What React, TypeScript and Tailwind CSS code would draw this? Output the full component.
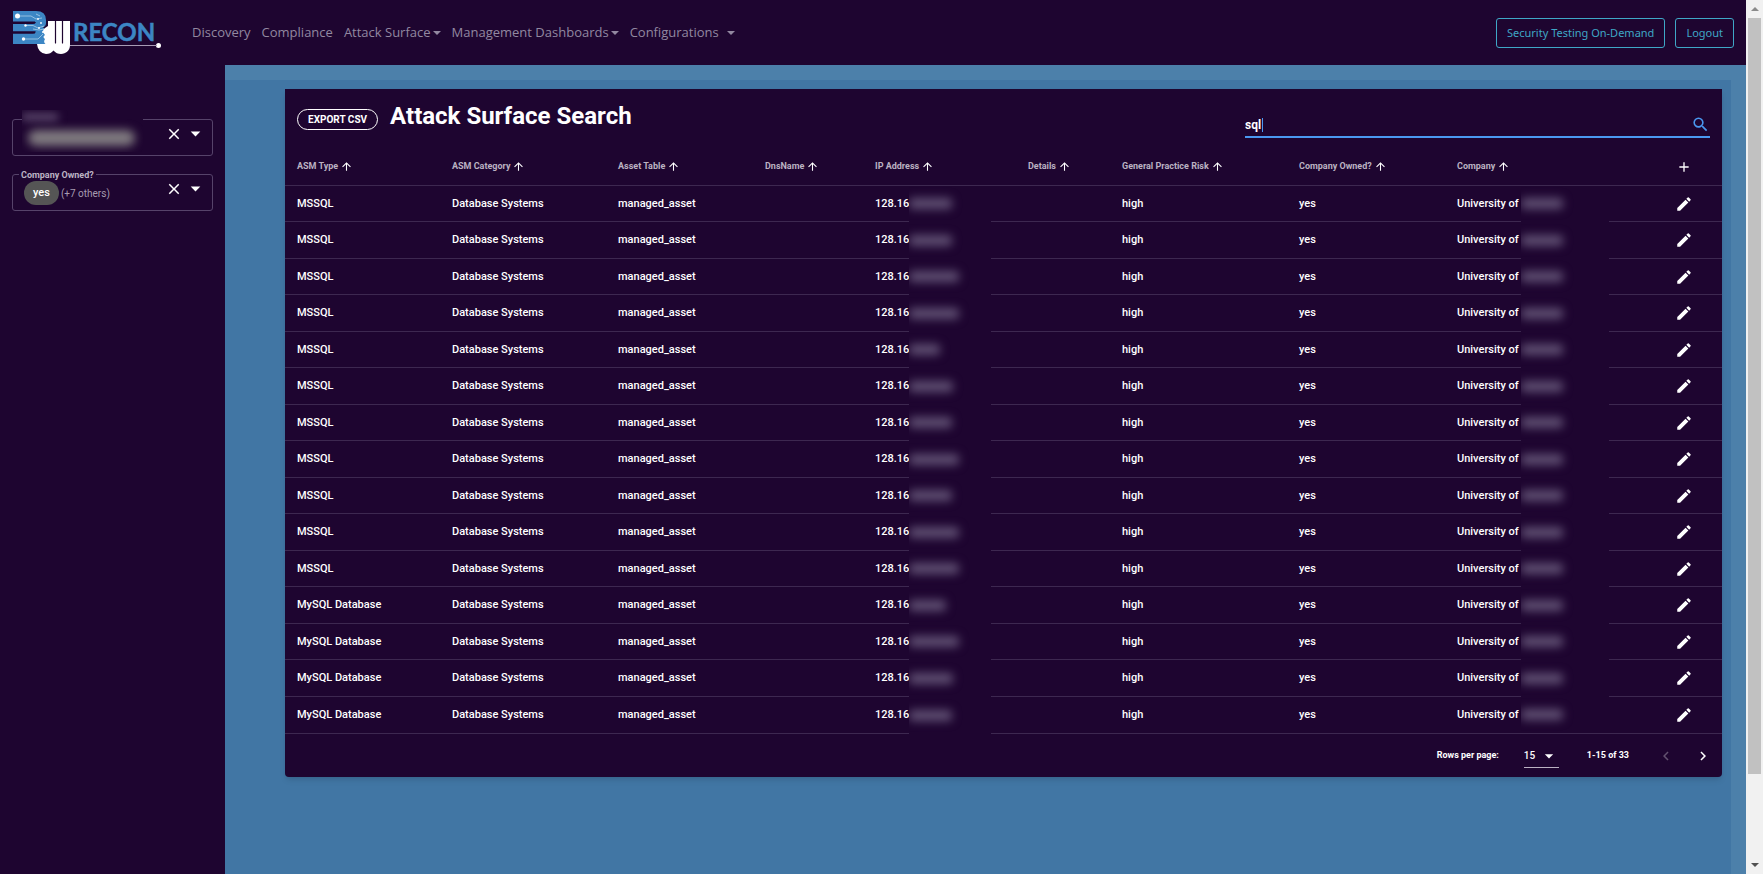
import React from "react";
import {
  MdAdd,
  MdArrowDropDown,
  MdArrowUpward,
  MdChevronLeft,
  MdChevronRight,
  MdClose,
  MdEdit,
  MdSearch,
} from "react-icons/md";

const columns = [
  { name: "ASM Type", width: "w-[155px]" },
  { name: "ASM Category", width: "w-[166px]" },
  { name: "Asset Table", width: "w-[147px]" },
  { name: "DnsName", width: "w-[110px]" },
  { name: "IP Address", width: "w-[153px]" },
  { name: "Details", width: "w-[94px]" },
  { name: "General Practice Risk", width: "w-[177px]" },
  { name: "Company Owned?", width: "w-[158px]" },
  { name: "Company", width: "w-[200px]" },
];

// Width in pixels of the hidden tail of each address.
const maskedTails = [43, 43, 50, 50, 31, 44, 43, 50, 43, 50, 50, 37, 50, 44, 43];

const rows = maskedTails.map((tail, i) => ({
  type: i < 11 ? "MSSQL" : "MySQL Database",
  category: "Database Systems",
  table: "managed_asset",
  ip: "128.16",
  tail,
  risk: "high",
  owned: "yes",
  company: "University of",
}));

function Logo() {
  return (
    <svg viewBox="0 0 162 64" className="h-16 w-[162px]" role="img" aria-label="BW Recon">
      <path
        fill="#3c86c4"
        d="M13 11H36Q46 11 46 20V23Q46 26 43 27.500Q46 29 46 33V44H13V33.500H33Q36 33 36 31.500H13V24H33Q36 23.500 36 22H13Z"
      />
      <path d="M13 22.500H35M13 32.500H35" stroke="#1e0530" strokeWidth="1.800" />
      <g stroke="#b9d8ee" strokeWidth="0.700" fill="none">
        <path d="M18 16H31L36 19L42 18M25 25.500H33L38 28L44 26M24 39H38L43 34M33 29L39 30L44 29M36 14L40 16" />
      </g>
      <g fill="#fff">
        <circle cx="17.500" cy="16" r="2.500" />
        <circle cx="25.500" cy="25.500" r="1.200" />
        <circle cx="23.500" cy="39" r="1.700" />
        <circle cx="38" cy="19" r="0.900" />
        <circle cx="41" cy="23" r="0.900" />
        <circle cx="39" cy="28" r="1" />
        <circle cx="43" cy="32" r="1" />
        <path d="M48 21H70V45C70 50.500 66 54 61 54Q56.500 54 53.500 50.500Q50.500 54 46 54Q38 53 37 44H45.500Q43 42 45 39Q42 37 45 35Q41 31 45 28L48 26Z" />
        <circle cx="158.500" cy="45.500" r="2.500" />
      </g>
      <path d="M55.500 21V43M62.500 21V43" stroke="#1e0530" strokeWidth="1.200" strokeLinecap="round" />
      <path d="M70 45.500H157" stroke="#a79bb5" strokeWidth="1" />
      <text
        x="73"
        y="41"
        fill="#3c86c4"
        stroke="#3c86c4"
        strokeWidth="0.500"
        fontFamily="Lato, sans-serif"
        fontWeight="700"
        fontSize="24"
      >
        RECON
      </text>
    </svg>
  );
}

function Caret() {
  return <span className="inline-block border-x-4 border-t-4 border-x-transparent border-t-current" />;
}

function FilterActions() {
  return (
    <div className="ml-auto flex items-center pr-[5px]">
      <button aria-label="Clear" className="p-px text-white">
        <MdClose size={18} />
      </button>
      <button aria-label="Open" className="text-white">
        <MdArrowDropDown size={23} />
      </button>
    </div>
  );
}

function Masked({ width }: { width: number }) {
  return (
    <span
      className="-mt-px block h-[11px] rounded-sm bg-[#5f4f72] blur-[5px]"
      style={{ width }}
    />
  );
}

export default function App() {
  return (
    <div className="flex min-h-screen bg-[#1e0530] font-[Roboto,sans-serif] text-white">
      <div className="flex min-w-0 flex-1 flex-col">
        <header className="flex h-[65px] items-start font-['Open_Sans',sans-serif]">
          <a href="#home" className="mr-[30px] shrink-0">
            <Logo />
          </a>
          <nav className="flex h-full items-center gap-[11px] pt-px text-[13px] text-[#9288a0]">
            <a href="#discovery">Discovery</a>
            <a href="#compliance">Compliance</a>
            <a href="#attack-surface" className="flex items-center gap-[2px]">
              Attack Surface <Caret />
            </a>
            <a href="#dashboards" className="flex items-center gap-[2px]">
              Management Dashboards <Caret />
            </a>
            <a href="#configurations" className="flex items-center gap-2">
              Configurations <Caret />
            </a>
          </nav>
          <div className="ml-auto flex h-full items-center gap-[10px] pr-3 font-['Noto_Sans',sans-serif] text-[11px] text-[#3fa7c6]">
            <button className="h-[30px] rounded-[3px] border border-[#3fa7c6] px-[10px] pt-px">
              Security Testing On-Demand
            </button>
            <button className="h-[30px] rounded-[3px] border border-[#3fa7c6] px-[10px] pt-px">Logout</button>
          </div>
        </header>

        <div className="flex flex-1">
          <aside className="flex w-[225px] shrink-0 flex-col gap-[18px] px-3 pt-[54px]">
            <div className="relative flex h-[37px] items-start rounded-[3px] border border-[#56436a] pt-[2px]">
              <div className="absolute -top-[10px] left-[9px] h-[42px] w-[121px] overflow-hidden bg-[#1e0530]">
                <div className="mt-[4px] h-[6px] w-9 bg-[#6a587a] blur-[4px]" />
                <div className="ml-[6px] mt-[10px] h-4 w-[107px] rounded-full bg-[#807b80] blur-[5px]" />
              </div>
              <input aria-label="Filter" className="w-0 flex-1 bg-transparent outline-none" />
              <FilterActions />
            </div>
            <div className="relative flex h-[37px] items-start rounded-[3px] border border-[#56436a] pt-[2px]">
              <label
                htmlFor="owned"
                className="absolute -top-[6px] left-[6px] bg-[#1e0530] px-[2px] text-[9px] leading-3 font-bold text-[#bcb3c4]"
              >
                Company Owned?
              </label>
              <div className="flex items-center gap-[2px] pt-1 pl-[11px]">
                <span className="flex h-6 items-center rounded-full bg-[#555555] px-[9px] text-[11px] font-medium">
                  yes
                </span>
                <span className="text-[10px] text-[#a79cb0]">(+7 others)</span>
              </div>
              <input id="owned" className="w-0 flex-1 bg-transparent outline-none" />
              <FilterActions />
            </div>
          </aside>

          <main className="min-w-0 flex-1 border-t-[15px] border-r-[15px] border-[#4c80aa] bg-[#4176a4] pt-[9px] pr-[9px] pl-[60px]">
            <section className="rounded-b bg-[#1e0530] shadow-md">
              <div className="flex h-[59px] px-3">
                <button className="mt-5 flex h-[21px] items-center rounded-full border border-white px-[10px] text-[10px] font-bold">
                  EXPORT CSV
                </button>
                <h1 className="mt-[11px] ml-3 text-2xl leading-8 font-bold">Attack Surface Search</h1>
                <div className="relative mt-6 ml-auto flex h-[25px] w-[465px] items-center border-b-2 border-[#4a98f0]">
                  <input
                    aria-label="Search"
                    defaultValue="sql"
                    className="min-w-0 flex-1 bg-transparent text-xs font-bold outline-none"
                  />
                  <span className="absolute top-[5px] left-[17px] h-[14px] w-px bg-[#4a98f0]" />
                  <MdSearch size={19} className="text-[#4a98f0]" />
                </div>
              </div>

              <table className="w-full table-fixed border-separate border-spacing-0 text-left">
                <thead>
                  <tr className="h-[38px] text-[9px] text-[#bbb2c2]">
                    {columns.map((c) => (
                      <th key={c.name} className={`${c.width} border-b border-[#3d2850] p-0 pl-3 font-bold`}>
                        <span className="flex items-center gap-[2px] whitespace-nowrap">
                          {c.name}
                          <MdArrowUpward size={13} className="text-white" stroke="currentColor" />
                        </span>
                      </th>
                    ))}
                    <th className="w-[77px] border-b border-[#3d2850] p-0">
                      <button aria-label="Add" className="mx-auto block text-white">
                        <MdAdd size={16} stroke="currentColor" />
                      </button>
                    </th>
                  </tr>
                </thead>
                <tbody className="text-[11px] leading-4 font-medium text-white [&_td]:border-b [&_td]:border-[#3d2850] [&_td]:p-0 [&_td]:pl-3">
                  {rows.map((r, i) => (
                    <tr key={i} className="h-[36px] last:h-[37px] even:h-[37px]">
                      <td>{r.type}</td>
                      <td>{r.category}</td>
                      <td>{r.table}</td>
                      <td />
                      <td className="relative">
                        {r.ip}
                        <span className="absolute top-0 -bottom-px left-[46px] flex w-[82px] items-center overflow-hidden bg-[#1e0530]">
                          <Masked width={r.tail} />
                        </span>
                      </td>
                      <td />
                      <td>{r.risk}</td>
                      <td>{r.owned}</td>
                      <td className="relative">
                        {r.company}
                        <span
                          className={`absolute top-0 left-[76px] flex w-[88px] items-center overflow-hidden bg-[#1e0530] ${
                            i === rows.length - 1 ? "bottom-0" : "-bottom-px"
                          }`}
                        >
                          <Masked width={42} />
                        </span>
                      </td>
                      <td className="!pl-0">
                        <button aria-label="Edit" className="mx-auto block">
                          <MdEdit size={18} />
                        </button>
                      </td>
                    </tr>
                  ))}
                </tbody>
              </table>

              <div className="flex h-[43px] items-center justify-end pr-[10px] text-[9px] font-bold">
                <label htmlFor="per-page">Rows per page:</label>
                <div className="mt-px ml-[25px] flex h-6 w-[35px] items-center border-b border-[#bbb2c2]">
                  <select id="per-page" className="w-4 appearance-none bg-transparent text-[10px] font-medium outline-none">
                    <option>15</option>
                  </select>
                  <MdArrowDropDown size={20} className="shrink-0" />
                </div>
                <span className="ml-7">1-15 of 33</span>
                <button aria-label="Previous page" className="ml-7 text-[#62516f]" disabled>
                  <MdChevronLeft size={18} />
                </button>
                <button aria-label="Next page" className="ml-[19px]">
                  <MdChevronRight size={18} stroke="currentColor" />
                </button>
              </div>
            </section>
          </main>
        </div>
      </div>

      <div className="flex w-[17px] shrink-0 flex-col items-center bg-[#f1f1f1]" aria-hidden="true">
        <span className="my-[7px] border-x-4 border-b-4 border-x-transparent border-b-[#8a8a8a]" />
        <span className="w-[13px] flex-[757] bg-[#c1c1c1]" />
        <span className="flex-[82]" />
        <span className="my-[7px] border-x-4 border-t-4 border-x-transparent border-t-[#505050]" />
      </div>
    </div>
  );
}
